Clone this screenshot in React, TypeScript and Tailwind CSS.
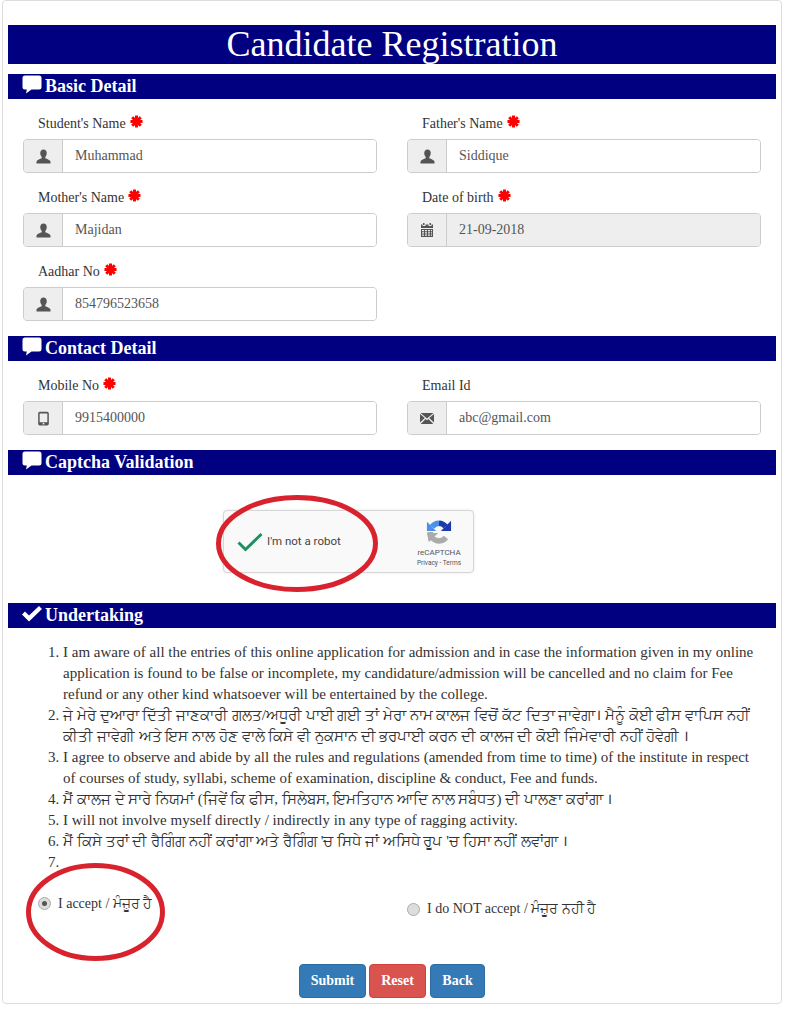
import type { ReactNode } from 'react'

const serif = 'font-["Liberation_Serif","Noto_Sans",serif]'

function CommentIcon() {
  return (
    <svg viewBox="0 0 20 20" className="h-5 w-5 fill-white" aria-hidden>
      <path d="M3 0.5h14a2.5 2.5 0 0 1 2.5 2.5v9a2.5 2.5 0 0 1-2.5 2.5H9.5L4 18.5l.8-4H3A2.5 2.5 0 0 1 .5 12V3A2.5 2.5 0 0 1 3 .5z" />
    </svg>
  )
}

function OkIcon() {
  return (
    <svg viewBox="0 0 20 16" className="h-4 w-5 fill-white" aria-hidden>
      <path d="M0 8.5l3-3 4 4L17 0l3 3L7 15.5z" />
    </svg>
  )
}

function UserIcon() {
  return (
    <svg viewBox="0 0 16 16" className="h-[15px] w-[15px] fill-[#555]" aria-hidden>
      <path d="M8 .5c2.2 0 3.5 1.6 3.5 3.8 0 1.7-.7 3.3-1.6 4.2v1.3c1.9.8 4.6 1.6 5.3 2.9.3.6.3 1.9.3 2.8H.5c0-.9 0-2.2.3-2.8.7-1.3 3.4-2.1 5.3-2.9V8.5C5.2 7.6 4.5 6 4.5 4.3 4.5 2.1 5.8.5 8 .5z" />
    </svg>
  )
}

function CalendarIcon() {
  return (
    <svg viewBox="0 0 14 14" className="h-[14px] w-[14px] fill-[#555]" aria-hidden>
      <path d="M3 0h1.5v2H3zM9.500 0H11v2H9.500zM1 1.500h1.500V3h3V1.500h3V3h3V1.500H13V5H1z" />
      <path
        fillRule="evenodd"
        d="M1 6h12v8H1zM2 7v1.200h2V7zm3 0v1.200h2V7zm3 0v1.200h2V7zm3 0v1.200h1V7zM2 9.200v1.300h2V9.200zm3 0v1.300h2V9.200zm3 0v1.300h2V9.200zm3 0v1.300h1V9.200zM2 11.500v1.300h2v-1.300zm3 0v1.300h2v-1.300zm3 0v1.300h2v-1.300zm3 0v1.300h1v-1.300z"
      />
    </svg>
  )
}

function PhoneIcon() {
  return (
    <svg viewBox="0 0 12 16" className="h-[15px] w-[11px] fill-[#555]" aria-hidden>
      <path
        fillRule="evenodd"
        d="M2 .5h8A1.800 1.800 0 0 1 11.800 2.300v11.400A1.800 1.800 0 0 1 10 15.500H2A1.800 1.800 0 0 1 .2 13.700V2.300A1.800 1.800 0 0 1 2 .5zM1.800 2.500v9.500h8.400V2.500zM6 12.600a1 1 0 1 0 0 2 1 1 0 0 0 0-2z"
      />
    </svg>
  )
}

function EnvelopeIcon() {
  return (
    <svg viewBox="0 0 14 11" className="h-[11px] w-[14px] fill-[#555]" aria-hidden>
      <path d="M0 1l4.800 4L0 9.500zM14 1v8.500L9.200 5zM.6 0h12.800L7 5.400zM.7 11l4.900-5L7 7.200 8.400 6l4.900 5z" />
    </svg>
  )
}

function Star() {
  return (
    <svg viewBox="0 0 14 14" className="ml-[4px] inline-block h-[13px] w-[13px] align-[0px]" aria-hidden>
      <g stroke="#f00" strokeWidth="3.200">
        <path d="M7 .5v13M.5 7h13M2.400 2.400l9.200 9.200M11.600 2.400l-9.200 9.200" />
      </g>
    </svg>
  )
}

function SectionBar({ icon, title }: { icon: ReactNode; title: string }) {
  return (
    <div className="flex h-[25px] items-center bg-[#000080] pl-[14px] text-white">
      <span className="flex w-[23px] -translate-y-[2px] items-center">{icon}</span>
      <h2 className="text-lg font-bold leading-[25px]">{title}</h2>
    </div>
  )
}

function Field({
  label,
  required,
  icon,
  value,
  readOnly,
}: {
  label: string
  required?: boolean
  icon: ReactNode
  value: string
  readOnly?: boolean
}) {
  return (
    <div className="mb-[15px]">
      <div className="mb-[5px] h-5 pl-[15px] text-sm leading-5 text-[#333]">
        {label}
        {required && <Star />}
      </div>
      <div className="flex h-[34px] rounded border border-[#ccc] text-sm text-[#555]">
        <span className="flex w-[39px] shrink-0 items-center justify-center rounded-l-[3px] border-r border-[#ccc] bg-[#eee]">
          {icon}
        </span>
        <span className={`flex-1 rounded-r-[3px] pl-3 leading-8 ${readOnly ? 'bg-[#eee]' : 'bg-white'}`}>{value}</span>
      </div>
    </div>
  )
}

function RecaptchaLogo() {
  return (
    <svg viewBox="0 0 28 28" className="h-[26px] w-[26px]" fill="none" aria-hidden>
      <path d="M6.500 8.500A9.500 9.500 0 0 1 14 4.500" stroke="#4a90e8" strokeWidth="6" />
      <path d="M1 3l10 10H1z" fill="#4a90e8" />
      <path d="M14 4.500a9.500 9.500 0 0 1 7 3.500" stroke="#1c3aa9" strokeWidth="6" />
      <path d="M27 2v11H16z" fill="#1c3aa9" />
      <path d="M4.500 14a9.500 9.500 0 0 0 17 6" stroke="#ababab" strokeWidth="6" />
      <path d="M1 15h12L3 25z" fill="#ababab" />
    </svg>
  )
}

function Radio({ checked }: { checked?: boolean }) {
  return (
    <span className="flex h-[13px] w-[13px] shrink-0 items-center justify-center rounded-full border border-[#aaa] bg-[#ddd]">
      {checked && <span className="h-[5px] w-[5px] rounded-full bg-[#555]" />}
    </span>
  )
}

export default function App() {
  return (
    <div className={`${serif} h-[1009px] w-[787px] bg-white`}>
      <div className="relative mx-[2px] h-[1004px] w-[780px] rounded border border-[#ddd] px-[5px] pt-[24px]">
        <h1 className="mb-[10px] h-[39px] bg-[#000080] text-center text-4xl leading-[39px] text-white">
          Candidate Registration
        </h1>

        <SectionBar icon={<CommentIcon />} title="Basic Detail" />
        <div className="grid grid-cols-2 gap-x-[30px] px-[15px] pt-[15px]">
          <Field label="Student's Name" required icon={<UserIcon />} value="Muhammad" />
          <Field label="Father's Name" required icon={<UserIcon />} value="Siddique" />
          <Field label="Mother's Name" required icon={<UserIcon />} value="Majidan" />
          <Field label="Date of birth" required icon={<CalendarIcon />} value="21-09-2018" readOnly />
          <Field label="Aadhar No" required icon={<UserIcon />} value="854796523658" />
        </div>

        <SectionBar icon={<CommentIcon />} title="Contact Detail" />
        <div className="grid grid-cols-2 gap-x-[30px] px-[15px] pt-[15px]">
          <Field label="Mobile No" required icon={<PhoneIcon />} value="9915400000" />
          <Field label="Email Id" icon={<EnvelopeIcon />} value="abc@gmail.com" />
        </div>

        <SectionBar icon={<CommentIcon />} title="Captcha Validation" />
        <div className="flex h-[128px] pl-[215px] pt-[35px]">
          <div className="flex h-[63px] w-[251px] items-center rounded-sm border border-[#d6d6d6] bg-[#f9f9f9] font-['Roboto',sans-serif] shadow-[0_0_3px_rgba(0,0,0,0.1)]">
            <svg viewBox="0 0 26 20" className="ml-[13px] h-5 w-[26px] fill-none stroke-[#1f8f5f] stroke-[3px]" aria-hidden>
              <path d="M1.500 10.500l7 7L24.500 2" />
            </svg>
            <span className="ml-[4px] text-[11.500px] text-[#444]">I'm not a robot</span>
            <div className="ml-auto mr-[9px] flex w-[50px] translate-y-[2px] flex-col items-center whitespace-nowrap text-[#555]">
              <RecaptchaLogo />
              <span className="mt-[2px] text-[8px] leading-[11px]">reCAPTCHA</span>
              <span className="text-[6.500px] leading-[10px]">Privacy - Terms</span>
            </div>
          </div>
        </div>

        <SectionBar icon={<OkIcon />} title="Undertaking" />
        <ol className="ml-[15px] mt-[14px] list-decimal pl-[40px] pr-[16px] text-[15px] leading-[21px] text-[#333]">
          <li>
            I am aware of all the entries of this online application for admission and in case the information given in my online
            application is found to be false or incomplete, my candidature/admission will be cancelled and no claim for Fee refund
            or any other kind whatsoever will be entertained by the college.
          </li>
          <li>
            ਜੇ ਮੇਰੇ ਦੁਆਰਾ ਦਿੱਤੀ ਜਾਣਕਾਰੀ ਗਲਤ/ਅਧੂਰੀ ਪਾਈ ਗਈ ਤਾਂ ਮੇਰਾ ਨਾਮ ਕਾਲਜ ਵਿਚੋਂ ਕੱਟ ਦਿਤਾ ਜਾਵੇਗਾ। ਮੈਨੂੰ ਕੋਈ ਫੀਸ ਵਾਪਿਸ ਨਹੀਂ ਕੀਤੀ ਜਾਵੇਗੀ ਅਤੇ ਇਸ
            ਨਾਲ ਹੋਣ ਵਾਲੇ ਕਿਸੇ ਵੀ ਨੁਕਸਾਨ ਦੀ ਭਰਪਾਈ ਕਰਨ ਦੀ ਕਾਲਜ ਦੀ ਕੋਈ ਜਿੰਮੇਵਾਰੀ ਨਹੀਂ ਹੋਵੇਗੀ ।
          </li>
          <li>
            I agree to observe and abide by all the rules and regulations (amended from time to time) of the institute in respect
            of courses of study, syllabi, scheme of examination, discipline &amp; conduct, Fee and funds.
          </li>
          <li>ਮੈਂ ਕਾਲਜ ਦੇ ਸਾਰੇ ਨਿਯਮਾਂ (ਜਿਵੇਂ ਕਿ ਫੀਸ, ਸਿਲੇਬਸ, ਇਮਤਿਹਾਨ ਆਦਿ ਨਾਲ ਸਬੰਧਤ) ਦੀ ਪਾਲਣਾ ਕਰਾਂਗਾ ।</li>
          <li>I will not involve myself directly / indirectly in any type of ragging activity.</li>
          <li>ਮੈਂ ਕਿਸੇ ਤਰਾਂ ਦੀ ਰੈਗਿੰਗ ਨਹੀਂ ਕਰਾਂਗਾ ਅਤੇ ਰੈਗਿੰਗ 'ਚ ਸਿਧੇ ਜਾਂ ਅਸਿਧੇ ਰੂਪ 'ਚ ਹਿਸਾ ਨਹੀਂ ਲਵਾਂਗਾ ।</li>
          <li className="h-[21px]"></li>
        </ol>

        <div className="mt-[15px] grid grid-cols-2 text-sm leading-5 text-[#333]">
          <label className="flex items-center gap-[7px] pl-[30px]">
            <Radio checked />I accept / ਮੰਜ਼ੂਰ ਹੈ
          </label>
          <label className="mt-[11px] flex items-center gap-[7px] pl-[15px]">
            <Radio />I do NOT accept / ਮੰਜ਼ੂਰ ਨਹੀ ਹੈ
          </label>
        </div>

        <div className="mt-[45px] flex pl-[291px] text-sm font-bold text-white">
          <button className="h-[34px] w-[67px] rounded border border-[#2e6da4] bg-[#337ab7]">Submit</button>
          <button className="ml-[3px] h-[34px] w-[57px] rounded border border-[#d43f3a] bg-[#d9534f]">Reset</button>
          <button className="ml-[4px] h-[34px] w-[55px] rounded border border-[#2e6da4] bg-[#337ab7]">Back</button>
        </div>

        <svg viewBox="0 0 162 97" className="pointer-events-none absolute left-[213px] top-[494px] h-[97px] w-[162px] fill-none stroke-[#d8232e] stroke-[5px]" aria-hidden>
          <ellipse cx="81" cy="48.500" rx="78.500" ry="46" />
        </svg>
        <svg viewBox="0 0 139 98" className="pointer-events-none absolute left-[23px] top-[862px] h-[98px] w-[139px] fill-none stroke-[#d8232e] stroke-[5px]" aria-hidden>
          <ellipse cx="69.500" cy="49" rx="67" ry="46.500" />
        </svg>
      </div>
    </div>
  )
}
